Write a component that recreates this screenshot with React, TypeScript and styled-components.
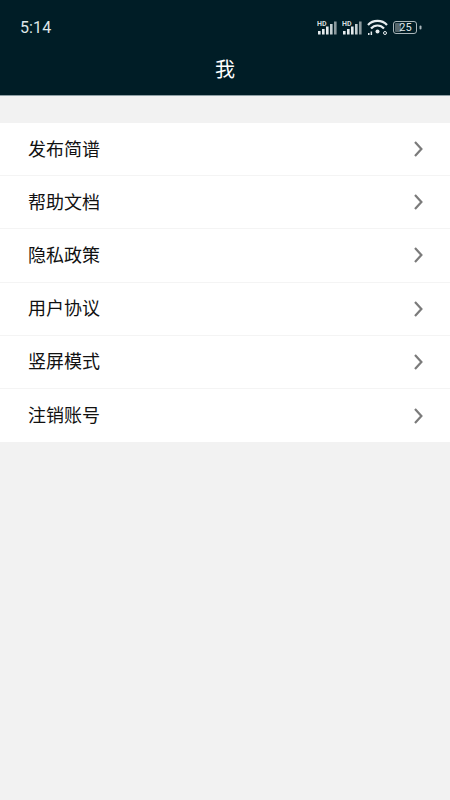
import React from "react";
import styled, { createGlobalStyle } from "styled-components";

const Global = createGlobalStyle`
  html, body { margin: 0; padding: 0; background: #f2f2f2; }
  #root { min-height: 800px; }
  * { box-sizing: border-box; }
`;
const Page = styled.div`
  width: 450px; height: 800px; background: #f2f2f2; display: flex; flex-direction: column;
  overflow: hidden; font-family: "Noto Sans CJK SC", "Noto Sans", sans-serif;
`;
const Header = styled.header`
  height: 96px; background: #001d26; display: flex; flex-direction: column; flex: none;
  border-bottom: 1px solid #8fa0a5;
`;
const StatusBar = styled.div`
  height: 40px; margin-top: 7px; padding: 0 28px 0 20px; display: flex; align-items: center; justify-content: space-between;
`;
const Clock = styled.span`
  font-family: Roboto, sans-serif; font-size: 16px; font-weight: 400; color: #dfe6e8; letter-spacing: 0.1px;
`;
const StatusIcons = styled.div`
  display: flex; align-items: center; gap: 5px;
`;
const Title = styled.h1`
  margin: 0; flex: 1; display: flex; align-items: center; justify-content: center; padding-bottom: 4px;
  font-size: 20px; font-weight: 400; color: #fff; line-height: 1;
`;
const List = styled.ul`
  list-style: none; margin: 27px 0 0; padding: 0; background: #fff;
`;
const Row = styled.li`
  height: 53.2px; padding: 0 27px 0 28px; display: flex; align-items: center; justify-content: space-between;
  border-bottom: 1px solid #f4f4f4;
  &:last-child { border-bottom: none; }
`;
const Label = styled.span`
  font-size: 18px; color: #111; line-height: 1; margin-top: -3px;
`;
const Signal = () => (
  <svg width="20" height="15" viewBox="0 0 20 15">
    <text x="0" y="5.5" fontFamily="Roboto, sans-serif" fontWeight="700" fontSize="7" fill="#d4dcdf">HD</text>
    <g fill="#e4eaec">
      <rect x="1" y="11" width="2.6" height="3.5" />
      <rect x="5" y="9" width="2.6" height="5.5" />
      <rect x="9" y="6.5" width="2.6" height="8" />
    </g>
    <rect x="13" y="4" width="2.6" height="10.5" fill="#c3ced1" />
    <rect x="17" y="1.5" width="2.6" height="13" fill="#8c9a9e" />
  </svg>
);
const Wifi = () => (
  <svg width="21" height="16" viewBox="0 0 21 16" fill="none" stroke="#e8eef0" strokeWidth="2.2">
    <path d="M1 6 C6 0.5 15 0.5 20 6" />
    <path d="M4 9.5 C7.5 5.5 13.5 5.5 17 9.5" />
    <circle cx="10.5" cy="12.5" r="2" fill="#e8eef0" stroke="none" />
    <rect x="1" y="14" width="1.5" height="2" fill="#e8eef0" stroke="none" />
    <rect x="3.6" y="12.5" width="1.5" height="3.5" fill="#e8eef0" stroke="none" />
    <circle cx="18" cy="14" r="1.5" stroke="#e8eef0" strokeWidth="1" />
  </svg>
);
const Battery = () => (
  <svg width="29" height="13" viewBox="0 0 29 13">
    <rect x="0.5" y="0.5" width="23" height="12" rx="2.5" fill="none" stroke="#aab6ba" />
    <rect x="2" y="2" width="6" height="9" rx="1" fill="#56666b" />
    <rect x="26.5" y="4.5" width="2" height="4" rx="1" fill="#aab6ba" />
    <text x="12.5" y="10.4" textAnchor="middle" fontFamily="Roboto, sans-serif" fontSize="11" fill="#dfe6e8">25</text>
  </svg>
);
const Chevron = () => (
  <svg width="10" height="16" viewBox="0 0 10 16" fill="none" stroke="#7b7b7b" strokeWidth="2.2">
    <path d="M2 1 L8.4 8 L2 15" />
  </svg>
);
const items = ["发布简谱", "帮助文档", "隐私政策", "用户协议", "竖屏模式", "注销账号"];

export default function App() {
  return (
    <Page>
      <Global />
      <Header>
        <StatusBar>
          <Clock>5:14</Clock>
          <StatusIcons>
            <Signal />
            <Signal />
            <Wifi />
            <Battery />
          </StatusIcons>
        </StatusBar>
        <Title>我</Title>
      </Header>
      <List>
        {items.map((t) => (
          <Row key={t}>
            <Label>{t}</Label>
            <Chevron />
          </Row>
        ))}
      </List>
    </Page>
  );
}
